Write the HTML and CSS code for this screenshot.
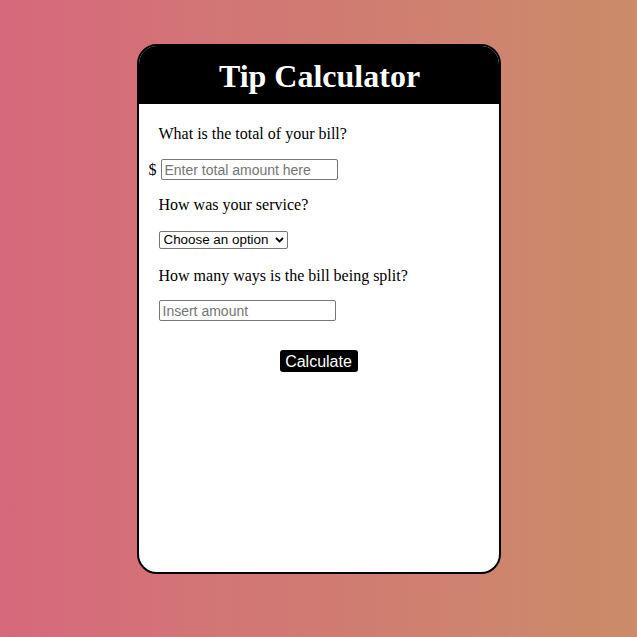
FILE: index.html
```html
<!DOCTYPE html>
<html>
<head>
<meta charset="utf-8">
<link rel="stylesheet" href="styles.css">
</head>
<body>
<div class="card">
  <div class="header"><h1 class="title">Tip Calculator</h1></div>
  <div class="content">
    <p class="label">What is the total of your bill?</p>
    <div class="dollar-row"><span class="dollar">$</span><input class="field" type="text" placeholder="Enter total amount here"></div>
    <p class="label">How was your service?</p>
    <div class="select-row">
      <div class="select-wrap">
        <select class="select"><option>Choose an option</option></select>
        <svg class="chevron" width="9" height="6" viewBox="0 0 9 6"><path d="M1 1 L4.5 4.5 L8 1" fill="none" stroke="#000" stroke-width="1.8"/></svg>
      </div>
    </div>
    <p class="label label-after-select">How many ways is the bill being split?</p>
    <div class="row"><input class="field" type="text" placeholder="Insert amount"></div>
    <div class="btn-row"><button class="btn">Calculate</button></div>
  </div>
</div>
</body>
</html>
```
FILE: styles.css
```css
html, body {
  margin: 0;
  padding: 0;
}
body {
  width: 637px;
  height: 637px;
  background: linear-gradient(to right, #d6697c, #cb8c69);
  font-family: "Liberation Serif", "Times New Roman", serif;
  display: flex;
  justify-content: center;
  align-items: flex-start;
}
.card {
  margin-top: 44px;
  width: 364px;
  height: 530px;
  box-sizing: border-box;
  border: 2px solid #000;
  border-radius: 20px;
  background: #fff;
  overflow: hidden;
}
.header {
  background: #000;
  height: 58px;
  display: flex;
  justify-content: center;
  align-items: center;
}
.title {
  margin: 0;
  color: #fff;
  font-size: 32px;
  font-weight: bold;
  line-height: 1;
  padding-left: 2px;
  padding-top: 2px;
}
.content {
  padding: 21px 20px 0 20px;
  display: flex;
  flex-direction: column;
}
.label {
  margin: 16px 0 0 0;
  font-size: 16px;
  line-height: 18px;
  color: #000;
}
.content > .label:first-child {
  margin-top: 0;
}
.label-after-select {
  margin-top: 18px;
}
.dollar-row {
  margin: 16px 0 0 -10px;
  display: flex;
  align-items: center;
  height: 21px;
}
.dollar {
  font-size: 16px;
  width: 12px;
}
.row {
  margin-top: 15px;
  display: flex;
  height: 21px;
  align-items: center;
}
.select-row {
  margin-top: 17px;
  display: flex;
}
.select-wrap {
  position: relative;
  display: flex;
}
.field {
  box-sizing: border-box;
  width: 177px;
  height: 21px;
  margin: 0;
  padding: 1px 3px;
  border: 1px solid #767676;
  border-radius: 2px;
  font-family: "Liberation Sans", Arial, sans-serif;
  font-size: 14px;
  color: #000;
  background: #fff;
}
.field::placeholder {
  color: #757575;
}
.select {
  -webkit-appearance: none;
  appearance: none;
  box-sizing: border-box;
  width: 129px;
  height: 18px;
  margin: 0;
  padding: 0 0 0 4px;
  border: 1px solid #767676;
  border-radius: 2px;
  font-family: "Liberation Sans", Arial, sans-serif;
  font-size: 13.4px;
  line-height: 16px;
  color: #000;
  background: #fff;
}
.chevron {
  position: absolute;
  right: 4px;
  top: 6px;
  pointer-events: none;
}
.btn-row {
  margin-top: 29px;
  display: flex;
  justify-content: center;
}
.btn {
  width: 78px;
  height: 22px;
  padding: 1px 0 0 0;
  border: none;
  border-radius: 3px;
  background: #000;
  color: #fff;
  font-family: "Liberation Sans", Arial, sans-serif;
  font-size: 16px;
}
```
